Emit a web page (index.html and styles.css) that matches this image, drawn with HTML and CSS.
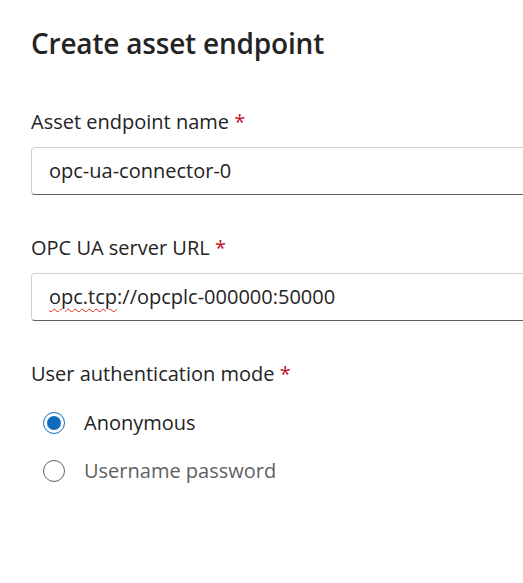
FILE: index.html
```html
<!DOCTYPE html>
<html>
<head>
<meta charset="utf-8">
<link rel="stylesheet" href="styles.css">
</head>
<body>
<div class="panel">
  <h1 class="title">Create asset endpoint</h1>
  <div class="field">
    <div class="label">Asset endpoint name <span class="req">*</span></div>
    <div class="input">opc-ua-connector-0</div>
  </div>
  <div class="field">
    <div class="label">OPC UA server URL <span class="req">*</span></div>
    <div class="input"><span class="spell">opc.tcp</span>://opcplc-000000:50000</div>
  </div>
  <div class="field">
    <div class="label">User authentication mode <span class="req">*</span></div>
    <div class="radios">
      <div class="radio"><span class="dot checked"></span><span class="rtext">Anonymous</span></div>
      <div class="radio"><span class="dot"></span><span class="rtext muted">Username password</span></div>
    </div>
  </div>
</div>
</body>
</html>
```
FILE: styles.css
```css
html, body {
  margin: 0;
  padding: 0;
  background: #ffffff;
  overflow: hidden;
}
body {
  font-family: "Segoe UI", "Open Sans", "Noto Sans", sans-serif;
  color: #242424;
  width: 523px;
  height: 583px;
}
.panel {
  padding: 25px 0 0 31px;
  width: 492px;
  overflow: hidden;
}
.title {
  margin: 0;
  font-size: 28px;
  font-weight: 600;
  line-height: 36px;
  letter-spacing: -0.2px;
}
.field {
  display: flex;
  flex-direction: column;
}
.title + .field {
  margin-top: 48px;
}
.field + .field {
  margin-top: 40px;
}
.label {
  font-size: 20px;
  line-height: 26px;
  margin-bottom: 12px;
  white-space: nowrap;
}
.req {
  color: #c50f1f;
}
.input {
  width: 540px;
  flex-shrink: 0;
  height: 46px;
  border: 1px solid #d1d1d1;
  border-bottom-color: #616161;
  border-radius: 4px;
  padding: 0 0 0 17px;
  font-size: 20px;
  line-height: 46px;
  white-space: nowrap;
}
.spell {
  text-decoration: underline wavy #e0241c;
  text-decoration-thickness: 1px;
  text-underline-offset: 4px;
}
.radios {
  display: flex;
  flex-direction: column;
  gap: 16px;
  margin-top: 8px;
}
.radio {
  display: flex;
  align-items: center;
  height: 32px;
  padding-left: 12px;
}
.dot {
  width: 22px;
  height: 22px;
  box-sizing: border-box;
  border: 1px solid #616161;
  border-radius: 50%;
  display: flex;
  align-items: center;
  justify-content: center;
  margin-right: 19px;
}
.dot.checked {
  border-color: #0f6cbd;
}
.dot.checked::after {
  content: "";
  width: 14px;
  height: 14px;
  border-radius: 50%;
  background: #0f6cbd;
}
.rtext {
  font-size: 20px;
  line-height: 26px;
}
.muted {
  color: #616161;
}
```
